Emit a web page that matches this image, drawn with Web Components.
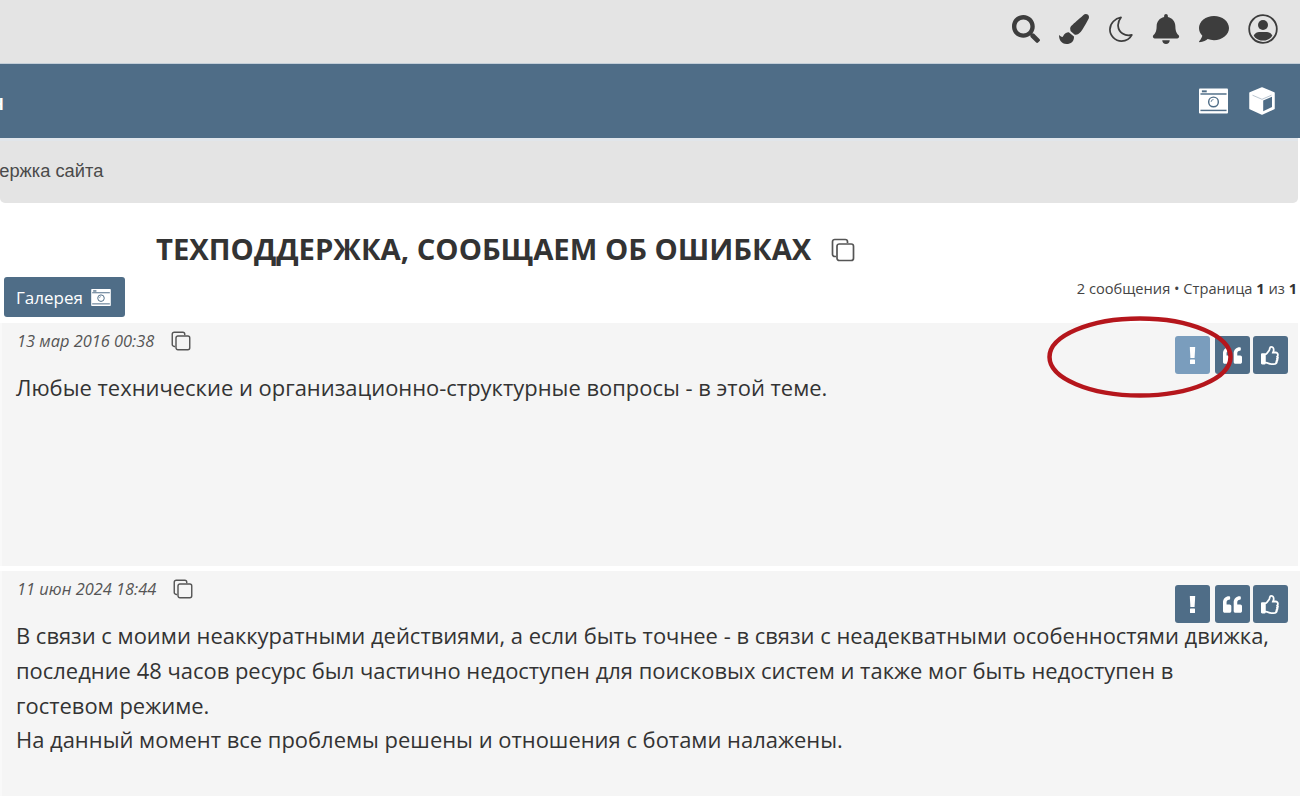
<!DOCTYPE html>
<html lang="ru">
<head>
<meta charset="utf-8">
<title>Техподдержка</title>
<style>
html,body{margin:0;padding:0;background:#fff;overflow:hidden}
body{width:1300px;height:796px;font-family:"Open Sans",sans-serif;color:#333;position:relative}
</style>
</head>
<body>
<template id="ic-search"><svg viewBox="0 0 512 512"><path d="M505 442.7L405.3 343c-4.5-4.5-10.6-7-17-7H372c27.6-35.3 44-79.7 44-128C416 93.1 322.9 0 208 0S0 93.1 0 208s93.1 208 208 208c48.3 0 92.7-16.4 128-44v16.3c0 6.4 2.5 12.5 7 17l99.7 99.7c9.4 9.4 24.6 9.4 33.9 0l28.3-28.3c9.4-9.4 9.4-24.6.1-34zM208 336c-70.7 0-128-57.2-128-128 0-70.7 57.2-128 128-128 70.7 0 128 57.2 128 128 0 70.7-57.2 128-128 128z"/></svg></template>
<template id="ic-brush"><svg viewBox="0 0 512 512"><path d="M167.02 309.34c-40.12 2.58-76.53 17.86-97.19 72.3-2.35 6.21-8 9.98-14.59 9.98-11.11 0-45.46-27.67-55.25-34.35C0 439.62 37.93 512 128 512c75.86 0 128-43.77 128-120.19 0-3.11-.65-6.08-.97-9.13l-88.01-73.34zM457.89 0c-15.16 0-29.37 6.71-40.21 16.45C213.27 199.05 192 203.34 192 257.09c0 13.7 3.25 26.76 8.73 38.7l63.82 53.18c7.21 1.8 14.64 3.03 22.39 3.03 62.11 0 98.11-45.47 211.16-256.46 7.38-14.35 13.9-29.85 13.9-45.99C512 20.64 486 0 457.89 0z"/></svg></template>
<template id="ic-moon"><svg viewBox="0 0 26 28"><path d="M13.500 2C7.500 3 2 8 2 14.500 2 21 7.500 26.500 14 26.500c4.800 0 8.800-2.300 10.800-6.300-7.300 1.800-13.800-2.500-14.300-9.500C10.300 7.500 11.500 4.500 13.500 2z" fill="none" stroke="currentColor" stroke-width="1.800" stroke-linejoin="round"/></svg></template>
<template id="ic-bell"><svg viewBox="0 0 448 512"><path d="M224 512c35.32 0 63.97-28.65 63.97-64H160.03c0 35.35 28.65 64 63.97 64zm215.39-149.71c-19.32-20.76-55.47-51.99-55.47-154.29 0-77.7-54.48-139.9-127.94-155.16V32c0-17.67-14.32-32-31.98-32s-31.98 14.33-31.98 32v20.84C118.56 68.1 64.08 130.3 64.08 208c0 102.3-36.15 133.53-55.47 154.29-6 6.45-8.66 14.16-8.61 21.71.11 16.4 12.98 32 32.1 32h383.8c19.12 0 32-15.6 32.1-32 .05-7.55-2.61-15.27-8.61-21.71z"/></svg></template>
<template id="ic-comment"><svg viewBox="0 0 512 512"><path d="M256 32C114.6 32 0 125.1 0 240c0 49.6 21.4 95 57 130.7C44.5 421.1 2.7 466 2.2 466.5c-2.2 2.3-2.8 5.7-1.5 8.7S4.8 480 8 480c66.3 0 116-31.8 140.6-51.4 32.7 12.3 69 19.4 107.4 19.4 141.4 0 256-93.1 256-208S397.4 32 256 32z"/></svg></template>
<template id="ic-user"><svg viewBox="0 0 30 30"><defs><clipPath id="uc"><circle cx="15" cy="15" r="11.500"/></clipPath></defs><circle cx="15" cy="15" r="13.800" fill="none" stroke="currentColor" stroke-width="1.800"/><circle cx="15" cy="11" r="5"/><path clip-path="url(#uc)" d="M4 28c0-7 4-10 7-10h8c3 0 7 3 7 10z"/></svg></template>
<template id="ic-camera"><svg viewBox="0 0 30 26"><path fill="#fff" d="M1 0h28a1 1 0 0 1 1 1v24a1 1 0 0 1-1 1H1a1 1 0 0 1-1-1V1a1 1 0 0 1 1-1z"/><rect x="1.500" y="5" width="27" height="1.500" fill="#4f6d87"/><rect x="3" y="2" width="5" height="2" fill="#4f6d87"/><rect x="1.500" y="22" width="27" height="1.500" fill="#4f6d87"/><circle cx="15" cy="14" r="5" fill="none" stroke="#4f6d87" stroke-width="1.500"/><path d="M12.500 14a2.500 2.500 0 0 1 2.500-2.500" fill="none" stroke="#4f6d87" stroke-width=".8"/></svg></template>
<template id="ic-cube"><svg viewBox="0 0 28 28"><path fill="#fff" d="M14 1l12 5v15.500L14 27 2 21.500V6z" stroke="#fff" stroke-width="1.500" stroke-linejoin="round"/><path fill="#4f6d87" d="M15.200 13.500l8.800-3.800v10.300l-8.800 4.200z"/><path d="M4.500 8.200L14 12.300l9.500-4.100" fill="none" stroke="#a9b8c5" stroke-width=".8"/></svg></template>
<template id="ic-copy"><svg viewBox="0 0 24 24"><path fill="none" stroke="currentColor" stroke-width="1.700" d="M5 18.500H3.800A2.300 2.300 0 0 1 1.500 16.200V3.800A2.300 2.300 0 0 1 3.800 1.500h10.400A2.300 2.300 0 0 1 16.500 3.800V5"/><rect fill="none" stroke="currentColor" stroke-width="1.700" x="6" y="6" width="16.500" height="16.500" rx="2.300"/></svg></template>
<template id="ic-quote"><svg viewBox="0 0 512 512"><path d="M464 256h-80v-64c0-35.3 28.7-64 64-64h8c13.3 0 24-10.7 24-24V56c0-13.3-10.7-24-24-24h-8c-88.4 0-160 71.6-160 160v240c0 26.5 21.5 48 48 48h128c26.5 0 48-21.5 48-48V304c0-26.5-21.500-48-48-48zm-288 0H96v-64c0-35.3 28.7-64 64-64h8c13.3 0 24-10.7 24-24V56c0-13.3-10.7-24-24-24h-8C71.6 32 0 103.600 0 192v240c0 26.5 21.5 48 48 48h128c26.5 0 48-21.5 48-48V304c0-26.5-21.5-48-48-48z"/></svg></template>
<template id="ic-thumb"><svg viewBox="0 0 512 512"><path d="M466.27 286.69C475.04 271.84 480 256 480 236.85c0-44.015-37.218-85.58-85.82-85.58H357.7c4.92-12.81 8.85-28.13 8.85-46.54C366.55 31.936 328.86 0 271.28 0c-61.607 0-58.093 94.933-71.76 108.6-22.747 22.747-49.615 66.447-68.76 83.4H32c-17.673 0-32 14.327-32 32v240c0 17.673 14.327 32 32 32h64c14.893 0 27.408-10.174 30.978-23.95 44.509 1.001 75.06 39.94 177.802 39.94h34.220c77.117 0 111.986-39.423 112.94-95.33 13.319-18.425 20.299-43.122 17.34-66.99 9.854-18.452 13.664-40.343 8.99-62.99zm-61.75 53.83c12.56 21.13 1.26 49.41-13.94 57.57 7.7 48.78-17.608 65.9-53.12 65.9h-37.82c-71.639 0-118.029-37.82-171.64-37.82V240h10.92c28.36 0 67.98-70.89 94.54-97.46 28.36-28.36 18.91-75.63 37.82-94.54 47.27 0 47.27 32.98 47.27 56.73 0 39.17-28.36 56.72-28.36 94.54h103.99c21.11 0 37.73 18.91 37.82 37.82.09 18.9-12.82 37.81-28.36 37.81 22.18 23.930 18.680 35.020 0 65.620z"/></svg></template>

<forum-topbar>
  <ui-icon name="search" style="--w:28px;--h:28px"></ui-icon>
  <ui-icon name="brush" style="--w:30px;--h:30px"></ui-icon>
  <ui-icon name="moon" style="--w:25px;--h:28px"></ui-icon>
  <ui-icon name="bell" style="--w:28px;--h:30px"></ui-icon>
  <ui-icon name="comment" style="--w:30px;--h:30px"></ui-icon>
  <ui-icon name="user" style="--w:30px;--h:30px"></ui-icon>
</forum-topbar>
<forum-navbar label="н">
  <ui-icon name="camera" style="--w:29px;--h:26px"></ui-icon>
  <ui-icon name="cube" style="--w:28px;--h:28px"></ui-icon>
</forum-navbar>
<forum-crumbs>Поддержка сайта</forum-crumbs>
<topic-title>ТЕХПОДДЕРЖКА, СООБЩАЕМ ОБ ОШИБКАХ</topic-title>
<topic-actions></topic-actions>
<forum-post date="13 мар 2016 00:38" dim>
  Любые технические и организационно-структурные вопросы - в этой теме.
</forum-post>
<forum-post date="11 июн 2024 18:44" second>
  В связи с моими неаккуратными действиями, а если быть точнее - в связи с неадекватными особенностями движка, последние 48 часов ресурс был частично недоступен для поисковых систем и также мог быть недоступен в гостевом режиме.<br>На данный момент все проблемы решены и отношения с ботами налажены.
</forum-post>
<red-ring></red-ring>

<script>
class UiIcon extends HTMLElement {
  constructor() {
    super();
    this.attachShadow({ mode: "open" });
    const tpl = document.getElementById("ic-" + this.getAttribute("name"));
    this.shadowRoot.innerHTML = `<style>
      :host{display:inline-flex;width:var(--w,20px);height:var(--h,20px);color:inherit;flex:none}
      svg{width:100%;height:100%;fill:currentColor;display:block}
    </style>`;
    this.shadowRoot.appendChild(tpl.content.cloneNode(true));
  }
}
customElements.define("ui-icon", UiIcon);

class ForumTopbar extends HTMLElement {
  constructor() {
    super();
    this.attachShadow({ mode: "open" });
    this.shadowRoot.innerHTML = `<style>
      :host{display:flex;height:63px;box-sizing:border-box;background:#e4e4e4;color:#3d3d3d;
        justify-content:flex-end;align-items:center;gap:19px;padding:0 22px 6px 0}
    </style><slot></slot>`;
  }
}
customElements.define("forum-topbar", ForumTopbar);

class ForumNavbar extends HTMLElement {
  constructor() {
    super();
    this.attachShadow({ mode: "open" });
    this.shadowRoot.innerHTML = `<style>
      :host{display:flex;height:75px;box-sizing:border-box;border-top:1px solid #c3ced8;background:#4f6d87;color:#fff;align-items:center;
        padding-right:24px;font:600 22px "Open Sans",sans-serif}
      .label{margin-left:-10px;flex:1}
      .icons{display:flex;gap:20px;align-items:center}
    </style><span class="label">${this.getAttribute("label")}</span><div class="icons"><slot></slot></div>`;
  }
}
customElements.define("forum-navbar", ForumNavbar);

class ForumCrumbs extends HTMLElement {
  constructor() {
    super();
    this.attachShadow({ mode: "open" });
    this.shadowRoot.innerHTML = `<style>
      :host{display:flex;height:65px;box-sizing:border-box;border-top:3px solid #e1e6eb;margin-right:2px;background:#e4e4e4;border-radius:0 0 5px 5px;
        align-items:center;font:18.3px "Liberation Sans",sans-serif;color:#4a4a4a;padding-bottom:2px}
      span{margin-left:-45px}
    </style><span><slot></slot></span>`;
  }
}
customElements.define("forum-crumbs", ForumCrumbs);

class TopicTitle extends HTMLElement {
  constructor() {
    super();
    this.attachShadow({ mode: "open" });
    this.shadowRoot.innerHTML = `<style>
      :host{display:flex;height:74px;box-sizing:border-box;align-items:center;padding:20px 0 0 156px;gap:20px;color:#333;
        font:bold 29.25px "Open Sans",sans-serif}
      h2{margin:0;font:inherit;position:relative;top:-1px}
    </style><h2><slot></slot></h2><ui-icon name="copy" style="--w:24px;--h:24px;color:#555"></ui-icon>`;
  }
}
customElements.define("topic-title", TopicTitle);

class TopicActions extends HTMLElement {
  constructor() {
    super();
    this.attachShadow({ mode: "open" });
    this.shadowRoot.innerHTML = `<style>
      :host{display:flex;height:46px;padding-left:4px;padding-right:3px;justify-content:space-between;align-items:flex-start}
      a{display:flex;align-items:center;gap:8px;box-sizing:border-box;height:40px;width:121px;padding:0 12px;border-radius:3px;
        background:#4f6d87;color:#fff;font-size:17px;font-family:"Open Sans",sans-serif}
      .pg{font-size:14.65px;color:#444;margin-top:1px}
      b{font-weight:700;color:#333}
    </style><a>Галерея <ui-icon name="camera" style="--w:20px;--h:17px"></ui-icon></a>
    <div class="pg">2 сообщения • Страница <b>1</b> из <b>1</b></div>`;
  }
}
customElements.define("topic-actions", TopicActions);

class ForumPost extends HTMLElement {
  constructor() {
    super();
    this.attachShadow({ mode: "open" });
    const dim = this.hasAttribute("dim");
    this.shadowRoot.innerHTML = `<style>
      :host{display:block;margin-right:2px;margin-bottom:5px;background:#f5f5f5;box-sizing:border-box;
        height:243px;padding:7px 0 0 14px;position:relative;color:#333;border-left:2px solid #f9f9f9}
      :host([second]){height:240px;margin-right:0}
      .meta{display:flex;align-items:center;gap:17px;height:21px;padding-left:1px;font-style:italic;font-size:16.4px;color:#555}
      .body{margin-top:20px;font-size:21.95px;line-height:34.8px;max-width:1258px}
      .btns{position:absolute;top:13px;right:10px;display:flex}
      :host([second]) .btns{top:14px;right:12px}
      .b{width:35px;height:38px;border-radius:3px;background:#4f6d87;color:#fff;display:flex;align-items:center;justify-content:center;margin-left:3px}
      .b.first{margin-right:2px;margin-left:0}
      .b.dim{background:#7a9dbd}
    </style>
    <div class="meta"><span>${this.getAttribute("date")}</span><ui-icon name="copy" style="--w:20px;--h:20px;color:#555"></ui-icon></div>
    <div class="body"><slot></slot></div>
    <div class="btns">
      <div class="b first ${dim ? "dim" : ""}"><svg width="7" height="17" viewBox="0 0 7 17" fill="#fff"><path d="M.8 0h5.400l-.6 11H1.400z"/><rect x="1" y="12.500" width="5" height="4.500" rx=".6"/></svg></div>
      <div class="b"><ui-icon name="quote" style="--w:19px;--h:19px"></ui-icon></div>
      <div class="b"><ui-icon name="thumb" style="--w:19px;--h:19px"></ui-icon></div>
    </div>`;
  }
}
customElements.define("forum-post", ForumPost);

class RedRing extends HTMLElement {
  constructor() {
    super();
    this.attachShadow({ mode: "open" });
    this.shadowRoot.innerHTML = `<style>
      :host{position:absolute;left:1040px;top:310px;width:200px;height:95px;display:block}
      svg{display:block}
    </style><svg width="200" height="95" viewBox="0 0 200 95"><ellipse cx="100" cy="47" rx="90.500" ry="38.500" fill="none" stroke="#b5161c" stroke-width="4.500"/></svg>`;
  }
}
customElements.define("red-ring", RedRing);
</script>
</body>
</html>
